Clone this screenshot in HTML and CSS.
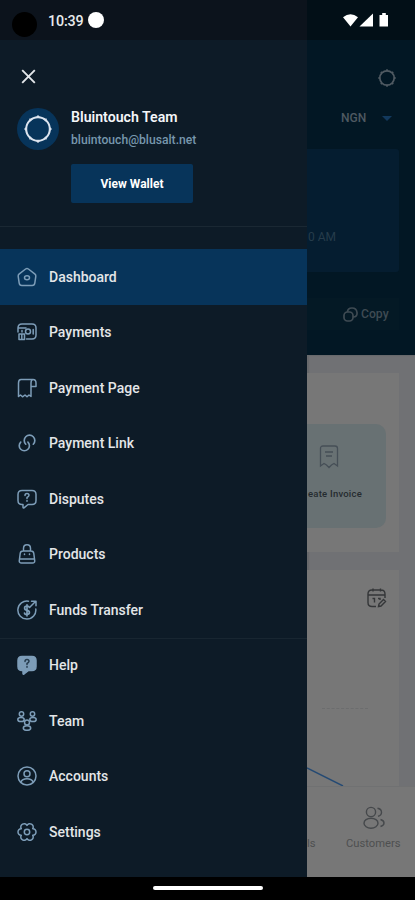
FILE: index.html
```html
<!DOCTYPE html>
<html lang="en">
<head>
<meta charset="utf-8">
<title>Dashboard menu</title>
<link rel="stylesheet" href="styles.css">
</head>
<body>
<div class="phone">
  <header class="status">
    <div class="status-left"><span class="camera"></span><span class="time">10:39</span><span class="notice"></span></div>
    <div class="status-right">
      <svg width="48" height="16" viewBox="0 0 48 16" fill="#fff"><path d="M0 4.3Q7.500-2 15 4.300L7.500 13.500Z"/><path d="M30 .5V13.500H16.500Z"/><path d="M37 2h2.200V0h3.600v2H45v11.500h-8.500V2Z"/></svg>
    </div>
  </header>
  <div class="screen">
    <aside class="drawer">
      <svg class="close" width="15" height="15" viewBox="0 0 15 15"><path d="M1.200 1.200 13.800 13.800M13.800 1.200 1.200 13.800"/></svg>
      <section class="profile">
        <div class="avatar"><svg width="30" height="30" viewBox="0 0 30 30"><circle cx="15" cy="15" r="11.800"/><path d="m15 1 3 3h-6ZM15 29l-3-3h6ZM1 15l3-3v6ZM29 15l-3 3v-6ZM6.200 4.500l3.700.8-3.300 3ZM23.800 4.500l-.4 3.800-3.300-3ZM6.200 25.500l.4-3.800 3.300 3ZM23.800 25.500l-3.700-.8 3.300-3Z"/></svg></div>
        <div class="who">
          <div class="name">Bluintouch Team</div>
          <div class="email">bluintouch@blusalt.net</div>
          <button class="wallet">View Wallet</button>
        </div>
      </section>
      <nav class="menu">
        <a class="item active"><svg class="ico" viewBox="0 0 20 20"><path d="M2 7.200 8.600 2q1.400-1 2.800 0L18 7.200q1 .8.800 2.200l-1 6.800q-.3 2.300-2.600 2.300H4.800q-2.300 0-2.600-2.300l-1-6.800Q1 8 2 7.200Z"/><ellipse cx="10" cy="10.800" rx="2.500" ry="2"/></svg><span>Dashboard</span></a>
        <a class="item"><svg class="ico" viewBox="0 0 20 20"><path d="M1 10V6q0-4 4-4h10q4 0 4 4v7q0 4-4 4H9.500M2 6h7"/><circle cx="11" cy="9.600" r="2.500"/><path d="M16.200 7.500v4.500M5 8.500v1.500M2 12h5.500v5.500H2ZM4.800 12v5.500"/></svg><span>Payments</span></a>
        <a class="item"><svg class="ico" viewBox="0 0 20 20"><path d="M4 1.500h12q3 0 3 3.500v3.500h-5V5q0-3.500 2-3.500M14 8v10.500l-2-1.500-2 1.800L8 17l-2.500 1.800-2-1.800-2 1.500V5Q1.500 1.500 4 1.500"/></svg><span>Payment Page</span></a>
        <a class="item"><svg class="ico link" viewBox="0.500 0.500 23 23"><path d="M13.060 10.940c2.290 2.290 2.290 6 0 8.280s-6 2.290-8.280 0-2.290-6 0-8.280"/><path d="M10.590 13.410c-2.380-2.380-2.380-6.240 0-8.620s6.240-2.380 8.620 0 2.380 6.240 0 8.620"/></svg><span>Payment Link</span></a>
        <a class="item"><svg class="ico" viewBox="0 0 20 20"><path d="M5 1.500h10q4 0 4 4v6q0 4-4 4h-4l-4 3.300q-1 .6-1-.6v-2.700H5q-4 0-4-4v-6q0-4 4-4Z"/><path d="M8 6.500q0-2 2-2t2 1.800q0 1.200-2 2.200v1M10 11.500v.8"/></svg><span>Disputes</span></a>
        <a class="item"><svg class="ico" viewBox="0 0 20 20"><path d="M6.500 7V4.500q0-3.700 3.500-3.700t3.500 3.700V7M6 7h8q2.500 0 2.800 2.500l.9 7q.3 2.500-2.200 2.500h-11Q2 19 2.300 16.500l.9-7Q3.500 7 6 7ZM3 15h14M7.500 10v.5M12.500 10v.5"/></svg><span>Products</span></a>
        <a class="item"><svg class="ico" viewBox="0 0 20 20"><path d="M11.500 1.200A9 9 0 1 0 18.800 9M13 7l5.500-5.500M14.500 1.300H19v4.500"/><path class="dollar" d="M12.400 7.500Q12 6 10 6 7.600 6 7.600 8T10 10.300 12.400 12.500 10 14.500 7.500 13M10 4.800v11"/></svg><span>Funds Transfer</span></a>
        <a class="item divided"><svg class="ico solid" viewBox="0 0 20 20"><path d="M5 1.500h10q4 0 4 4v6q0 4-4 4h-3.500L7 19q-1 .6-1-.6v-2.900H5q-4 0-4-4v-6q0-4 4-4Z"/><path class="mark" d="M8 6.500q0-2 2-2t2 1.800q0 1.200-2 2.200v1M10 11.500v.8"/></svg><span>Help</span></a>
        <a class="item"><svg class="ico" viewBox="0 0 20 20"><circle cx="4.500" cy="3" r="2.200"/><circle cx="15.500" cy="3" r="2.200"/><ellipse cx="4" cy="8.500" rx="3.200" ry="2.100"/><ellipse cx="16" cy="8.500" rx="3.200" ry="2.100"/><circle cx="10" cy="11.400" r="2.500"/><ellipse cx="10" cy="17" rx="3.700" ry="2.300"/></svg><span>Team</span></a>
        <a class="item"><svg class="ico" viewBox="0 0 20 20"><circle cx="10" cy="10" r="9"/><circle cx="10" cy="7.800" r="3"/><path d="M4 16q1.200-3.200 6-3.200t6 3.200"/></svg><span>Accounts</span></a>
        <a class="item"><svg class="ico" viewBox="0 0 20 20"><path d="M10 3.400C12-.5 18.100 3 15.700 6.700C20.100 6.500 20.100 13.500 15.700 13.300C18.100 17 12 20.500 10 16.600C8 20.500 1.900 17 4.300 13.300C-.1 13.500-.1 6.500 4.300 6.700C1.900 3 8-.5 10 3.400Z"/><circle cx="10" cy="10" r="2.700"/></svg><span>Settings</span></a>
      </nav>
    </aside>
    <main class="page">
      <section class="hero">
        <div class="gear"><svg width="20" height="20" viewBox="0 0 20 20"><circle cx="10" cy="10" r="7.200"/><path d="M10 1.200v2M10 16.800v2M1.200 10h2M16.800 10h2M3.800 3.800l1.200 1.200M15 15l1.200 1.200M16.200 3.800 15 5M5 15l-1.200 1.200"/></svg></div>
        <div class="currency"><span>NGN</span><i class="caret"></i></div>
        <div class="balance">0 AM</div>
        <div class="copy"><svg width="15" height="15" viewBox="0 0 15 15"><path d="M4.500 5q0-4 4.500-4t5 4.500-4 4.500"/><rect x="1" y="5" width="9" height="9" rx="3.500"/></svg><span>Copy</span></div>
      </section>
      <section class="content">
        <div class="card actions">
          <div class="invoice">
            <svg width="20" height="24" viewBox="0 0 20 24"><path d="M4 1h12q2.500 0 2.500 2.500V21L15 18.500 12.500 20 10 22.500 7.500 20 5 18.500 1.500 21V3.500Q1.500 1 4 1ZM6 7h8M7 11h6"/></svg>
            <span>eate Invoice</span>
          </div>
        </div>
        <div class="card chart">
          <svg class="calendar" width="20" height="20" viewBox="0 0 20 20"><path d="M9 18.500H5q-4 0-4-4V6q0-4 4-4h9q4 0 4 4v4M1.500 7h16M6 .5v3M13.500.5v3M5.500 10.500h2v4M11 10.500h2v1.500M11.500 18.500l.5-2.500 4.500-4.500 2 2L14 18Z"/></svg>
          <div class="gridline"></div>
          <svg class="trend" width="92" height="20" viewBox="0 0 92 20"><path d="M0 1 36 19"/></svg>
        </div>
      </section>
      <footer class="tabs">
        <span class="tab cut">ls</span>
        <div class="tab customers"><svg width="22" height="24" viewBox="0 0 22 24"><circle cx="8" cy="6" r="4.600"/><ellipse cx="8" cy="17.200" rx="7" ry="5"/><path d="M14.500 2.300q4 .7 4 4t-3.500 4M17.500 13.500q3.500 1 3.500 3.500t-3.500 3.500"/></svg><span>Customers</span></div>
      </footer>
    </main>
  </div>
  <div class="home"><span></span></div>
</div>
</body>
</html>
```
FILE: styles.css
```css
* { box-sizing: border-box; }
body { margin: 0; background: #000; font-family: Roboto, sans-serif; }
.phone { width: 415px; height: 900px; display: grid; grid-template-rows: 40px 837px 23px; overflow: hidden; }
svg { display: block; flex: none; fill: none; }

.status { display: grid; grid-template-columns: 307px 108px; }
.status-left { background: #0c131c; display: flex; align-items: center; padding-left: 12px; }
.camera { width: 25px; height: 25px; border-radius: 50%; background: #000; margin-top: 9px; }
.time { width: 36px; margin-left: 11px; color: #e9ebed; font-size: 14.3px; font-weight: 500; letter-spacing: -.15px; white-space: nowrap; margin-top: 2px; }
.notice { width: 16px; height: 16px; border-radius: 50%; background: #fff; margin-left: 4px; }
.status-right { background: #020f17; padding: 13px 0 0 36px; }
.status-right svg { fill: #fff; }

.screen { display: grid; grid-template-columns: 307px 108px; min-height: 0; }
.drawer { background: #0d1b27; }
.close { margin: 29px 0 0 21px; stroke: #e3e7ea; stroke-width: 1.900; }
.profile { height: 103px; margin-top: 24px; padding-left: 17px; display: flex; }
.avatar { width: 42px; height: 42px; border-radius: 50%; background: #07345a; display: grid; place-items: center; }
.avatar svg { stroke: #dce4ef; stroke-width: 2; }
.avatar path { fill: #dce4ef; stroke: none; }
.who { margin-left: 12px; }
.name { color: #f4f6f8; font-size: 14.150px; line-height: 18px; font-weight: 600; white-space: nowrap; }
.email { color: #7797ad; font-size: 12.150px; line-height: 16px; margin-top: 6px; font-weight: 500; white-space: nowrap; }
.wallet { display: block; width: 122px; height: 39px; margin-top: 16px; padding: 0; border: 0; border-radius: 2px; background: #07345a; color: #fff; font: 700 12px Roboto, sans-serif; }
.menu { margin-top: 15px; border-top: 1px solid #1a2833; padding-top: 22px; }
.item { height: 55.500px; display: flex; align-items: center; padding-left: 17px; gap: 12px; color: #e3e6e8; font-size: 14px; font-weight: 500; white-space: nowrap; }
.active { background: #07345a; }
.divided { box-shadow: inset 0 1px #182631; }
.ico { width: 20px; height: 20px; stroke: #7d9db8; stroke-width: 1.500; stroke-linecap: round; stroke-linejoin: round; }
.link { stroke-width: 1.900; }
.dollar { stroke-width: 1.700; }
.solid { fill: #7d9db8; }
.solid .mark { fill: none; stroke: #263c4e; }

.page { min-width: 0; overflow: hidden; display: grid; grid-template-rows: 315px 431px 91px; }
.hero { background: #021724; padding-top: 28px; }
.gear { display: flex; justify-content: flex-end; padding-right: 18px; }
.gear svg { stroke: #505a62; stroke-width: 1.700; }
.currency { height: 20px; margin-top: 20px; padding-left: 34px; display: flex; align-items: center; color: #4e5961; font-size: 12px; font-weight: 500; }
.caret { margin-left: 16px; border: 5px solid transparent; border-top-color: #12395d; border-bottom: 0; }
.balance { width: 92px; height: 123px; margin-top: 21px; padding: 80px 0 0 1px; border-radius: 0 3px 3px 0; background: #051d30; color: #263c4b; font-size: 12px; line-height: 17px; }
.copy { width: 92px; height: 32px; margin-top: 26px; padding-left: 36px; display: flex; align-items: center; gap: 3px; background: #041925; color: #3f4b53; font-size: 12.200px; font-weight: 500; }
.copy svg { stroke: #3f4b53; stroke-width: 1.700; }
.content { background: #707174; padding-top: 18px; box-shadow: inset 2px 1px 1px #67696c; }
.card { width: 92px; background: #777; overflow: hidden; }
.actions { height: 179px; padding-top: 51px; }
.invoice { width: 79px; height: 104px; padding-top: 21px; border-radius: 0 10px 10px 0; background: #687173; display: flex; flex-direction: column; align-items: flex-end; }
.invoice svg { margin-right: 47px; stroke: #464f57; stroke-width: 1.300; }
.invoice span { margin: 18px 24px 0 0; color: #252b2f; font-size: 9.500px; line-height: 14px; font-weight: 500; white-space: nowrap; letter-spacing: .220px; }
.chart { height: 216px; margin-top: 18px; padding-top: 18px; }
.calendar { margin-left: 60px; stroke: #343638; stroke-width: 1.400; }
.gridline { width: 46px; margin: 100px 0 0 15px; border-top: 1px dashed #6c6d6e; }
.trend { margin-top: 58px; stroke: #254a73; stroke-width: 1.400; }
.tabs { background: #777; border-top: 1px solid #707172; display: flex; color: #4e4f50; font-size: 11.200px; line-height: 14px; overflow: hidden; }
.cut { width: 39px; padding-top: 50px; }
.customers { padding-top: 19px; }
.customers svg { margin: 0 0 7px 17px; stroke: #45484b; stroke-width: 1.400; }
.home { display: flex; justify-content: center; padding-top: 9px; }
.home span { width: 110px; height: 4px; border-radius: 2px; background: #fff; }
```
